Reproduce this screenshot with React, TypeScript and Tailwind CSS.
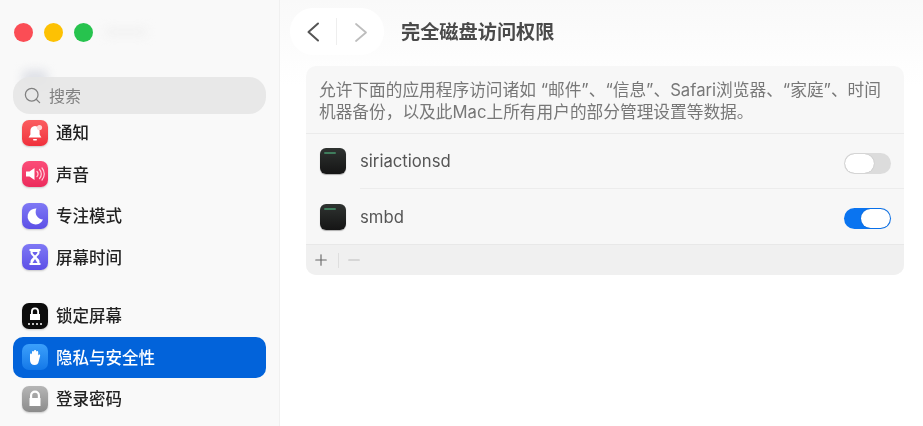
import { Minus, Plus, Search } from 'lucide-react'
import type { ReactNode } from 'react'

const cjk = "font-['Inter','Noto_Sans_CJK_SC',sans-serif]"

function IconBox({ className, children }: { className: string; children: ReactNode }) {
  return (
    <div className={`flex h-[26px] w-[26px] shrink-0 items-center justify-center rounded-[7px] shadow-[0_1px_2px_rgba(0,0,0,0.2)] ${className}`}>
      <svg width="26" height="26" viewBox="0 0 26 26" fill="white" aria-hidden>
        {children}
      </svg>
    </div>
  )
}

function NavRow({ icon, label, active }: { icon: ReactNode; label: string; active?: boolean }) {
  return (
    <div className={`flex h-[41.5px] items-center gap-[8px] rounded-[10px] px-[9px] ${active ? 'bg-[#0263da] text-white' : 'text-[#222222]'}`}>
      {icon}
      <span className="mt-[2px] text-[16.500px] font-medium">{label}</span>
    </div>
  )
}

function Terminal() {
  return (
    <div className="h-[26px] w-[26px] shrink-0 rounded-[6px] bg-gradient-to-b from-[#2f3331] to-[#151515] pl-[4px] pt-[4px] shadow-[0_1px_1px_rgba(0,0,0,0.3)]">
      <div className="h-[2px] w-[12px] rounded-full bg-[#3f7d5c]" />
    </div>
  )
}

function Toggle({ on }: { on?: boolean }) {
  return (
    <div className={`mt-[4px] flex h-[21px] w-[47px] rounded-full p-[1px] ${on ? 'justify-end bg-[#0a74f0]' : 'justify-start bg-[#dcdcdc]'}`}>
      <div className="h-[19px] w-[29px] rounded-full bg-white shadow-[0_0_1px_rgba(0,0,0,0.3)]" />
    </div>
  )
}

export default function App() {
  return (
    <div className={`flex h-[426px] w-[923px] overflow-hidden bg-white blur-[0.6px] ${cjk}`}>
      <aside className="relative flex w-[280px] shrink-0 flex-col overflow-hidden border-r border-[#f0f0f0] bg-[#f9f9f9] px-[13px]">
        <div className="absolute left-[22px] top-[70px] h-[16px] w-[26px] rounded-[6px] bg-[#dfe1e7] blur-[5px]" />
        <div className="absolute left-[105px] top-[28px] h-[8px] w-[42px] rounded-full bg-[#f1f1f1] blur-[5px]" />
        <div className="relative flex gap-[11px] pl-[1px] pt-[23px]">
          <span className="h-[19px] w-[19px] rounded-full bg-[#fb4d55]" />
          <span className="h-[19px] w-[19px] rounded-full bg-[#fdc103]" />
          <span className="h-[19px] w-[19px] rounded-full bg-[#27c34e]" />
        </div>
        <div className="relative mt-[35px] flex h-[37px] w-[253px] shrink-0 items-center gap-[7px] rounded-[17px] bg-[#e5e5e5]/90 pl-[10px] text-[#808080]">
          <Search size={19} strokeWidth={1.6} aria-hidden />
          <span className="text-[16px]">搜索</span>
        </div>
        <div className="relative -mt-[2px] w-[253px]">
          <NavRow
            label="通知"
            icon={
              <IconBox className="bg-gradient-to-b from-[#fb5c5f] to-[#f02f3c]">
                <path d="M13 6c-3 0-4.600 2.200-4.600 5v3.400L6.600 17.500h12.800L17.600 14.400V11C17.600 8.200 16 6 13 6z" />
                <circle cx="17.500" cy="7.500" r="2.600" fill="#ffd5d5" />
                <rect x="11" y="19" width="4" height="1.500" rx="0.750" />
              </IconBox>
            }
          />
          <NavRow
            label="声音"
            icon={
              <IconBox className="bg-gradient-to-b from-[#fb4c78] to-[#ec2a5c]">
                <path d="M4 10.500h3.500L12.500 7v12l-5-3.500H4z" />
                <path d="M15 10.500a3.500 3.500 0 0 1 0 5M17.500 8.500a6.500 6.500 0 0 1 0 9M20 7a9 9 0 0 1 0 12" fill="none" stroke="#ffd0dc" strokeWidth="1.200" strokeLinecap="round" />
              </IconBox>
            }
          />
          <NavRow
            label="专注模式"
            icon={
              <IconBox className="bg-gradient-to-b from-[#7f78f5] to-[#5d4fe6]">
                <path d="M14.500 5.500A8 8 0 1 0 21 16.500 7.500 7.500 0 0 1 14.500 5.500z" />
              </IconBox>
            }
          />
          <NavRow
            label="屏幕时间"
            icon={
              <IconBox className="bg-gradient-to-b from-[#7f78f5] to-[#5d4fe6]">
                <path d="M7.500 5h11v2h-1v1.500c0 2.200-2 3.200-3 4.500 1 1.300 3 2.300 3 4.500V19h1v2h-11v-2h1v-1.500c0-2.200 2-3.200 3-4.500-1-1.300-3-2.300-3-4.500V7h-1z" />
                <path d="M10.500 8h5c0 1.500-1.500 2.500-2.500 3.500C12 10.500 10.500 9.500 10.500 8zM13 15l2.500 4h-5z" fill="#6b60ec" />
              </IconBox>
            }
          />
          <div className="h-[17px]" />
          <NavRow
            label="锁定屏幕"
            icon={
              <IconBox className="bg-[#0c0c0c]">
                <path d="M9 11V8.500a4 4 0 0 1 8 0V11h1v6H8v-6zM10.800 11h4.400V8.500a2.200 2.200 0 0 0-4.400 0z" />
                <circle cx="7" cy="21" r="1" />
                <circle cx="11" cy="21" r="1" />
                <circle cx="15" cy="21" r="1" />
                <circle cx="19" cy="21" r="1" />
              </IconBox>
            }
          />
          <NavRow
            active
            label="隐私与安全性"
            icon={
              <IconBox className="bg-gradient-to-b from-[#3ba0fb] to-[#1378e8] shadow-none">
                <path d="M8 10.500c0-1.500 2-1.500 2 0V8c0-1.500 2-1.500 2 0V7c0-1.500 2.200-1.500 2.200 0v1c0-1.500 2-1.500 2 0v3.500c.4-1.500 2.300-1.200 1.900.3l-1.300 5.200C16.300 20 14.700 21 12.700 21 9.700 21 8 19 8 16z" />
              </IconBox>
            }
          />
          <NavRow
            label="登录密码"
            icon={
              <IconBox className="bg-gradient-to-b from-[#b5b5b5] to-[#8c8c8c]">
                <path d="M8 12V9.500a5 5 0 0 1 10 0V12h.500v8h-11v-8zM10.200 12h5.600V9.500a2.800 2.800 0 0 0-5.600 0z" />
              </IconBox>
            }
          />
        </div>
      </aside>

      <main className="flex-1 bg-gradient-to-b from-[#f9f9f9] to-white to-[20%] pl-[10px] pr-[19px]">
        <header className="flex h-[66px] shrink-0 items-start pt-[8px]">
          <div className="flex h-[47px] w-[94px] items-center rounded-[23px] bg-white">
            <div className="flex h-[27px] w-[47px] items-center justify-center border-r border-[#eeeeee]">
              <svg width="14" height="20" viewBox="0 0 14 20" fill="none" stroke="#555555" strokeWidth="2" strokeLinecap="round" strokeLinejoin="round" aria-hidden>
                <path d="M12 1.500L2.500 10l9.500 8.500" />
              </svg>
            </div>
            <div className="flex w-[47px] justify-center">
              <svg width="14" height="20" viewBox="0 0 14 20" fill="none" stroke="#bdbdbd" strokeWidth="1.700" strokeLinecap="round" strokeLinejoin="round" aria-hidden>
                <path d="M2 2l10 8.500L2 19" />
              </svg>
            </div>
          </div>
          <h1 className="ml-[17px] mt-[11px] text-[19.200px] font-bold leading-[26px] text-[#4a4a4a]">完全磁盘访问权限</h1>
        </header>

        <section className="ml-[16px] overflow-hidden rounded-[10px] bg-[#f7f7f7]">
          <p className="h-[68px] whitespace-nowrap border-b border-[#ebebeb] px-[13px] pt-[13px] text-[16.700px] leading-[22px] text-[#777777]">
            允许下面的应用程序访问诸如 “邮件”、“信息”、Safari浏览器、“家庭”、时间
            <br />
            机器备份，以及此Mac上所有用户的部分管理设置等数据。
          </p>
          <div className="flex h-[54px] items-center pl-[14px] pr-[13px]">
            <Terminal />
            <span className="ml-[14px] mt-[2px] flex-1 text-[16.700px] text-[#555555]">siriactionsd</span>
            <Toggle />
          </div>
          <div className="ml-[54px] border-t border-[#ececec]" />
          <div className="flex h-[55px] items-center pl-[14px] pr-[13px]">
            <Terminal />
            <span className="ml-[14px] mt-[2px] flex-1 text-[16.700px] text-[#555555]">smbd</span>
            <Toggle on />
          </div>
          <div className="flex h-[31px] items-center border-t border-[#e8e8e8] bg-[#f0f0f0] pl-[6px] text-[#666666]">
            <Plus size={18} strokeWidth={1.5} aria-hidden />
            <div className="ml-[8px] mr-[6px] h-[15px] border-l border-[#dedede]" />
            <Minus size={18} strokeWidth={1.5} className="text-[#bbbbbb]" aria-hidden />
          </div>
        </section>
      </main>
    </div>
  )
}
